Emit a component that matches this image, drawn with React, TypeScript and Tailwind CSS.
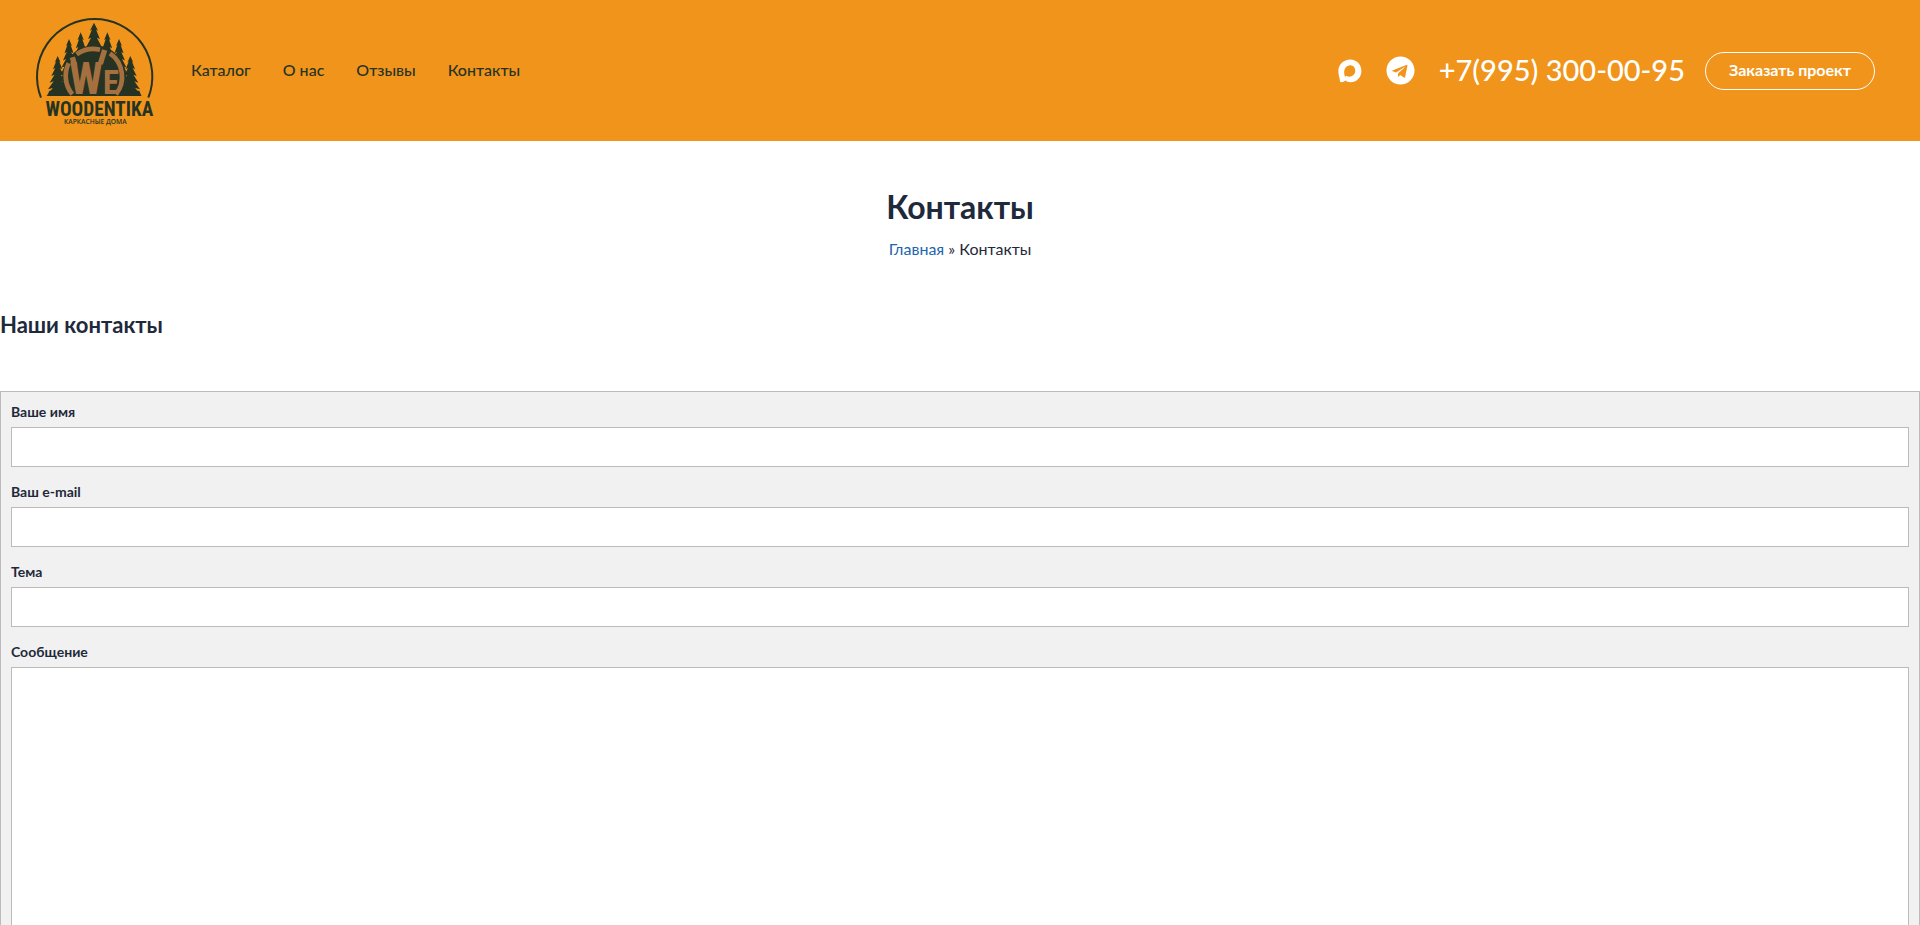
import { FaTelegram } from 'react-icons/fa';

const menu = ['Каталог', 'О нас', 'Отзывы', 'Контакты'];

const fields = [
  { id: 'your-name', label: 'Ваше имя', type: 'text' },
  { id: 'your-email', label: 'Ваш e-mail', type: 'email' },
  { id: 'your-subject', label: 'Тема', type: 'text' },
];

// tip x, tip y, base y, half width, tiers
const trees = [
  [113, 168, 288, 34, 6],
  [331, 168, 288, 34, 6],
  [147, 117, 288, 40, 8],
  [297, 117, 288, 40, 8],
  [182, 97, 288, 42, 8],
  [262, 97, 288, 42, 8],
  [222, 68, 288, 56, 9],
];

function pine([x, top, base, half, tiers]: number[]) {
  const step = (base - top) / tiers;
  const left: string[] = [];
  const right: string[] = [];
  for (let i = 1; i <= tiers; i++) {
    const w = half * (0.12 + (0.88 * i) / tiers);
    const y = top + step * i;
    left.unshift(`${x - w * 0.5},${y - 4}`, `${x - w},${y}`);
    right.push(`${x + w},${y}`, `${x + w * 0.5},${y - 4}`);
  }
  return [`${x},${top}`, ...right, ...left].join(' ');
}

function Logo() {
  return (
    <svg viewBox="45 45 360 333" className="w-[120px] h-[111px]" role="img" aria-label="Woodentika">
      <clipPath id="ground">
        <rect x="80" y="120" width="290" height="168" />
      </clipPath>
      <path d="M63 293 A173 173 0 1 1 385 293" fill="none" stroke="#263323" strokeWidth="6" />
      <g fill="#263323">
        {trees.map((tree) => (
          <polygon key={tree[0]} points={pine(tree)} />
        ))}
        <circle cx="223" cy="232" r="96" clipPath="url(#ground)" />
        <path d="M88 272 L358 272 L364 288 L82 288 Z" />
      </g>
      <g fill="none" stroke="#a5703f" strokeWidth="14">
        <path d="M170 163 A86 86 0 0 1 240 149" />
        <path d="M146 190 A86 86 0 0 0 157 283" />
        <path d="M270 160 A86 86 0 0 1 288 283" />
        <path d="M254 150 L241 192" strokeWidth="16" />
        <path d="M157 172 L164 196" strokeWidth="16" />
      </g>
      <g fill="#a5703f" fontWeight="bold" style={{ fontFamily: '"Roboto Condensed", "Liberation Sans Narrow", sans-serif' }}>
        <text x="148" y="281" fontSize="134">W</text>
        <text x="249" y="281" fontSize="98">E</text>
      </g>
      <g fill="#263323" textAnchor="middle">
        <text x="238" y="348" fontSize="58" fontWeight="bold" style={{ fontFamily: '"Roboto Condensed", "Liberation Sans Narrow", sans-serif' }}>
          WOODENTIKA
        </text>
        <text x="226" y="371" fontSize="20" fontWeight="600" style={{ fontFamily: '"Open Sans", sans-serif' }}>
          КАРКАСНЫЕ ДОМА
        </text>
      </g>
    </svg>
  );
}

function MaxIcon() {
  return (
    <svg viewBox="0 0 24 24" className="w-6 h-6" fill="currentColor" aria-hidden="true">
      <path
        fillRule="evenodd"
        d="M12.3 .6C18.7 .6 23.4 5.6 23.4 12S18.5 23.3 12.4 23.3c-2.2 0-3.3-.4-5.2-1.7-1.2 1.5-5 2.7-5.2.7C2 20.8 1.6 19.5 1.2 18 .8 16.3.4 14.5.4 11.9.4 5.6 5.6.6 12.3.6ZM12.5 6.2c-3.2-.2-5.6 2-6.2 5.3-.4 2.7.3 6 .9 6.1.3.1 1-.5 1.4-.9.7.5 1.6.9 2.5 1 3.2.1 6-2.4 6.2-5.6.1-3.2-1.9-5.7-4.8-5.9Z"
      />
    </svg>
  );
}

export default function App() {
  return (
    <div className="min-h-screen bg-white text-base text-[#1e293b] font-[Lato,sans-serif]">
      <header className="flex items-center justify-between bg-[#f0941b] py-[15px] pl-[35px] pr-[45px]">
        <div className="flex items-center gap-9">
          <a href="#">
            <Logo />
          </a>
          <nav className="flex items-center gap-8 pb-0.5 font-medium text-[#263323]">
            {menu.map((item) => (
              <a key={item} href="#">{item}</a>
            ))}
          </nav>
        </div>

        <div className="flex items-center text-white">
          <a href="#" aria-label="MAX" className="mr-6">
            <MaxIcon />
          </a>
          <a href="#" aria-label="Telegram" className="mr-6">
            <FaTelegram className="size-[29px]" />
          </a>
          <a href="tel:+79953000095" className="mr-5 pb-0.5 text-[29px] leading-9 font-medium">+7(995) 300-00-95</a>
          <button type="button" className="h-[38px] rounded-full border border-white px-[23px] pb-0.5 font-bold">
            Заказать проект
          </button>
        </div>
      </header>

      <main>
        <div className="pt-[46px] text-center">
          <h1 className="text-[32px] leading-10 font-bold">Контакты</h1>
          <p className="mt-[10px] leading-6">
            <a href="#" className="text-[#2264ac]">Главная</a> » Контакты
          </p>
        </div>

        <h2 className="mt-12 text-[22px] leading-8 font-bold">Наши контакты</h2>

        <form className="mt-[50px] flex flex-col gap-[15px] border border-[#bbb] bg-[#f1f1f1] p-[10px]">
          {fields.map((field) => (
            <div key={field.id}>
              <label htmlFor={field.id} className="block pb-[5px] text-sm leading-5 font-bold">{field.label}</label>
              <input id={field.id} type={field.type} className="block h-10 w-full border border-[#bbb] bg-white px-3" />
            </div>
          ))}
          <div>
            <label htmlFor="your-message" className="block pb-[5px] text-sm leading-5 font-bold">Сообщение</label>
            <textarea id="your-message" rows={12} className="block w-full resize-none border border-[#bbb] bg-white p-3" />
          </div>
        </form>
      </main>
    </div>
  );
}
